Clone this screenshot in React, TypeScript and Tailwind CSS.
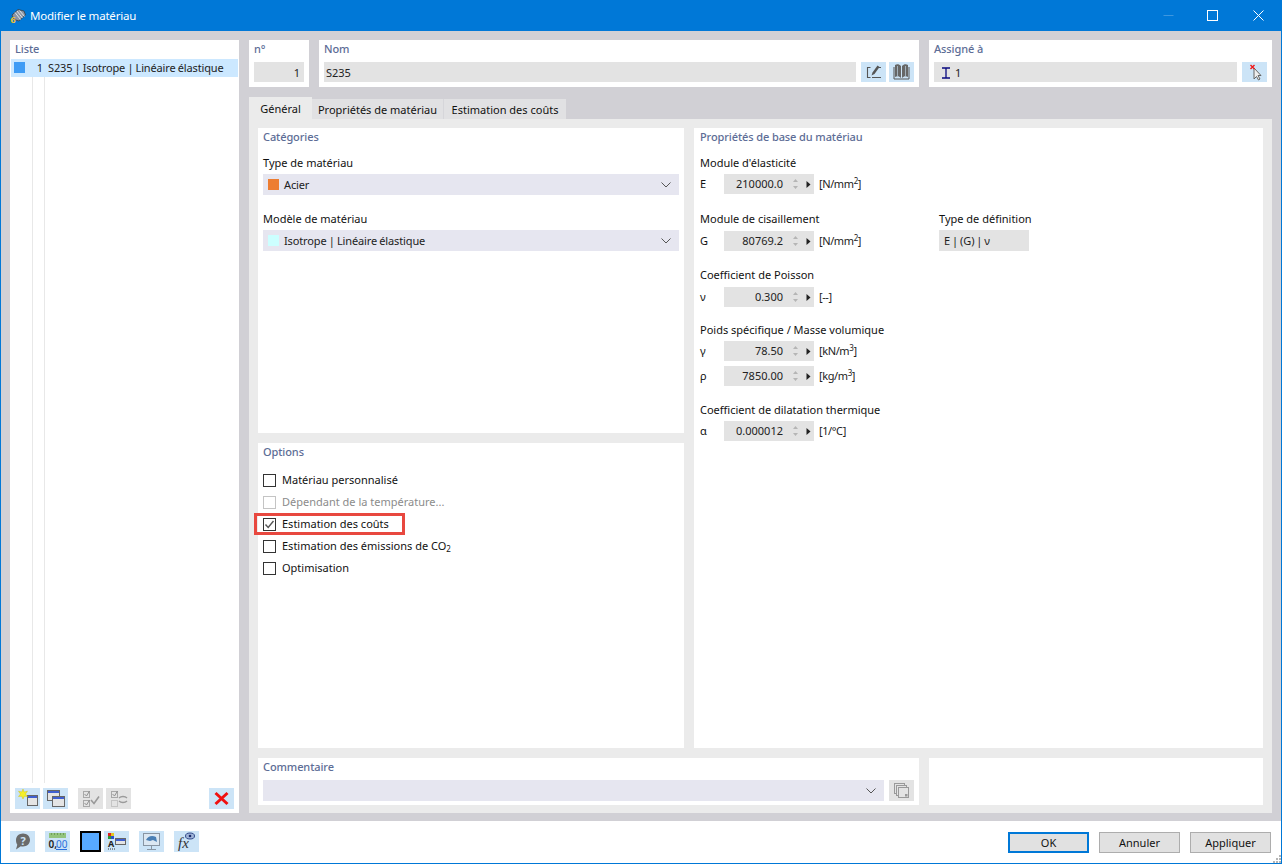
import { ReactNode } from "react";

const ToolBtn = ({ children, off, className }: { children?: ReactNode; off?: boolean; className?: string }) => (
  <div className={`w-[25px] h-[21px] flex items-center justify-center shrink-0 ${off ? "bg-[#e3e3e3]" : "bg-[#cce4f7]"} ${className ?? ""}`}>
    {children}
  </div>
);

const Icon = ({ children }: { children: ReactNode }) => (
  <svg width="25" height="21" viewBox="0 0 25 21" fill="none">
    {children}
  </svg>
);

const Win = ({ x, y, w, h }: { x: number; y: number; w: number; h: number }) => (
  <>
    <rect x={x + 0.5} y={y + 0.5} width={w} height={h} fill="#e4e4e4" stroke="#666" />
    <rect x={x + 1} y={y + 1} width={w - 1} height="2" fill="#3f5fd0" />
  </>
);

const CardTitle = ({ children, className }: { children: ReactNode; className?: string }) => (
  <div className={`h-4 leading-4 font-medium tracking-[-0.1px] text-[#5d6d96] ${className ?? ""}`}>{children}</div>
);

const Select = ({ swatch, text, className }: { swatch?: string; text?: string; className?: string }) => (
  <div className={`h-[21px] bg-[#e6e6f0] flex items-center pl-[5px] pr-[8px] ${className ?? ""}`}>
    {swatch && <div className="w-[11px] h-[11px] mr-[5px]" style={{ background: swatch }} />}
    <span className="flex-1 [word-spacing:-0.5px] tracking-[-0.13px]">{text}</span>
    <svg width="10" height="6" viewBox="0 0 10 6" fill="none">
      <path d="M0.5 0.5 5 5 9.5 0.5" stroke="#555" />
    </svg>
  </div>
);

const Spin = ({ sym, val, unit, sup }: { sym: string; val: string; unit: string; sup?: string }) => (
  <div className="flex items-center h-[20px]">
    <span className="w-[24px] text-[#111]">{sym}</span>
    <div className="w-[90px] h-full bg-[#e3e3e3] flex items-center text-[#222]">
      <span className="w-[59px] text-right">{val}</span>
      <svg className="ml-[9px]" width="7" height="14" viewBox="0 0 7 14" fill="#b5b5b5">
        <path d="M3.5 2 6 5H1zM3.5 12 1 9h5z" />
      </svg>
      <svg className="ml-[7px]" width="5" height="7" viewBox="0 0 5 7" fill="#222">
        <path d="M0.5 0v7L4.5 3.5z" />
      </svg>
    </div>
    <span className="ml-[5px] text-[#222] tracking-[-0.4px]">
      {unit}
      {sup && <sup className="text-[8px] leading-none">{sup}</sup>}
      {sup !== undefined ? "]" : ""}
    </span>
  </div>
);

const Check = ({ label, checked, off, sub }: { label: string; checked?: boolean; off?: boolean; sub?: string }) => (
  <div className="h-[22px] flex items-center relative">
    <div className={`w-[13px] h-[13px] border bg-white flex items-center justify-center ${off ? "border-[#c4c4c4]" : "border-[#333]"}`}>
      {checked && (
        <svg width="11" height="11" viewBox="0 0 11 11" fill="none">
          <path d="M1.5 5.5 4.2 8.500 9.500 2" stroke="#555" strokeWidth="1.4" />
        </svg>
      )}
    </div>
    <span className={`ml-[6px] ${off ? "text-[#8b8b8b]" : "text-[#111]"}`}>
      {label}
      {sub && <sub className="text-[8px] leading-none">{sub}</sub>}
    </span>
    {checked && <div className="absolute left-[-9px] top-0 w-[151px] h-[22px] border-[3px] border-[#e8483f]" />}
  </div>
);

const FootBtn = ({ children, primary }: { children: string; primary?: boolean }) => (
  <div className={`w-[81px] h-[21px] bg-[#e1e1e1] flex items-center justify-center text-[#111] ${primary ? "border-2 border-[#0078d7]" : "border border-[#adadad]"}`}>
    {children}
  </div>
);

export default function App() {
  return (
    <div className="w-[1282px] h-[864px] flex flex-col border border-[#0078d7] border-t-0 bg-white text-[11px] leading-4 overflow-hidden font-['Noto_Sans','Open_Sans',sans-serif]">
      {/* Title bar */}
      <div className="h-[31px] shrink-0 bg-[#0078d7] flex items-center text-white -mx-px px-[9px]">
        <svg width="18" height="18" viewBox="0 0 18 18">
          <path d="M3 8 9 2.500l6 1.500 1.500 4-6.500 6-5-1.500z" fill="#8d95a3" stroke="#333" strokeWidth="0.7" />
          <path d="M6 5.500l5.500 7M8 4l5.500 7M10.500 3.500l5 6" stroke="#e8ebf0" strokeWidth="0.9" />
          <text x="1.500" y="16" fontSize="9" fontWeight="700" fill="#f2c230">6</text>
        </svg>
        <span className="ml-[3px] text-[11.5px] tracking-[-0.2px]">Modifier le matériau</span>
        <div className="flex-1" />
        <svg width="11" height="11" viewBox="0 0 11 11" className="mr-[33px]">
          <path d="M0.5 5.500h10" stroke="#3d97e0" />
        </svg>
        <svg width="11" height="11" viewBox="0 0 11 11" fill="none" className="mr-[35px]">
          <rect x="0.500" y="0.500" width="10" height="10" stroke="#fff" />
        </svg>
        <svg width="11" height="11" viewBox="0 0 11 11" fill="none" className="mr-[9px]">
          <path d="M0.500 0.500l10 10M10.500 0.500l-10 10" stroke="#fff" />
        </svg>
      </div>

      {/* Body */}
      <div className="h-[790px] shrink-0 bg-[#d1d0d5] flex pl-[9px] pr-[9px] pt-[9px] pb-[8px] gap-[10px]">
        {/* Left list */}
        <div className="w-[229px] bg-white flex flex-col">
          <CardTitle className="ml-[5px] mt-px mb-[2px]">Liste</CardTitle>
          <div className="h-[18px] mx-px bg-[#cce8ff] flex items-center text-[#222] whitespace-nowrap">
            <div className="w-[11px] h-[11px] bg-[#3f9cf5] ml-[3px] mb-[2px] shrink-0" />
            <span className="w-[18px] text-right shrink-0">1</span>
            <span className="ml-[5px] [word-spacing:-0.5px] tracking-[-0.14px]">S235 | Isotrope | Linéaire élastique</span>
          </div>
          <div className="flex-1 flex pl-[22px]">
            <div className="w-[13px] border-x border-[#e8e8e8]" />
          </div>
          <div className="h-[21px] flex items-start px-[5px] mb-[4px] mt-[5px]">
            <ToolBtn>
              <Icon>
                <Win x={12} y={7} w={10} h={10} />
                <path d="M8 1l1.200 3 3.300-.8L10.500 6l2 2.500-3.200-.3L8 11l-1.300-2.800-3.200.3 2-2.500-2-2.800 3.300.8z" fill="#f5f02a" stroke="#c9b800" strokeWidth="0.4" />
              </Icon>
            </ToolBtn>
            <ToolBtn className="ml-[3px]">
              <Icon>
                <Win x={4} y={2} w={12} h={10} />
                <Win x={9} y={8} w={12} h={10} />
              </Icon>
            </ToolBtn>
            <ToolBtn off className="ml-[10px]">
              <Icon>
                <rect x="5.500" y="3.500" width="6" height="6" stroke="#a8a8a8" />
                <rect x="5.500" y="12.500" width="6" height="6" stroke="#a8a8a8" />
                <path d="M6.500 6l2 2 3-5M6.500 15l2 2 3-5" stroke="#8f8f8f" />
                <path d="M13 12l3 3.500 5-7" stroke="#999" strokeWidth="1.600" />
              </Icon>
            </ToolBtn>
            <ToolBtn off className="ml-[3px]">
              <Icon>
                <rect x="5.500" y="3.500" width="6" height="6" stroke="#a8a8a8" />
                <rect x="5.500" y="12.500" width="6" height="6" stroke="#c4c4c4" />
                <path d="M6.500 6l2 2 3-5" stroke="#8f8f8f" />
                <path d="M13 10c2-2 6-2 8 0M21 13c-2 2-6 2-8 0" stroke="#9a9a9a" strokeWidth="1.300" />
              </Icon>
            </ToolBtn>
            <div className="flex-1" />
            <ToolBtn>
              <Icon>
                <path d="M6.500 5l12 11M18.500 5l-12 11" stroke="#f01010" strokeWidth="3" />
              </Icon>
            </ToolBtn>
          </div>
        </div>

        {/* Right side */}
        <div className="w-[1023px] flex flex-col">
          <div className="h-[47px] flex gap-[10px]">
            <div className="w-[60px] bg-white px-[5px] pt-px">
              <CardTitle>n°</CardTitle>
              <div className="mt-[5px] h-[20px] bg-[#e3e3e3] flex items-center justify-end pr-[4px] pt-px text-[#222]">1</div>
            </div>
            <div className="w-[600px] bg-white px-[5px] pt-px">
              <CardTitle>Nom</CardTitle>
              <div className="mt-[5px] flex">
                <div className="flex-1 h-[20px] bg-[#e3e3e3] flex items-center pl-[2px] pt-px text-[#222]">S235</div>
                <ToolBtn className="ml-[5px] !h-[20px]">
                  <svg width="25" height="20" viewBox="0 0 25 20" fill="none">
                    <path d="M9.500 5.500H6.500v10h3M11 15.500h9" stroke="#555" strokeWidth="1.100" />
                    <path d="M10.500 13.500l1-3 5-7 2 1.500-5 7z" fill="#555" />
                    <path d="M17 5.500h3" stroke="#555" />
                  </svg>
                </ToolBtn>
                <ToolBtn className="ml-[3px] !h-[20px]">
                  <svg width="25" height="20" viewBox="0 0 25 20" fill="#666">
                    <path d="M6 3c2-1 4-1 6 1v12c-2-2-4-2-6-1zM13 4c2-2 4-2 6-1v12c-2-1-4-1-6 1z" />
                    <path d="M5 5v12h15V5" fill="none" stroke="#555" />
                    <path d="M8.500 4v10M16.500 4v10" stroke="#cce4f7" strokeWidth="0.600" />
                  </svg>
                </ToolBtn>
              </div>
            </div>
            <div className="w-[343px] bg-white px-[5px] pt-px">
              <CardTitle>Assigné à</CardTitle>
              <div className="mt-[5px] flex">
                <div className="flex-1 h-[20px] bg-[#e3e3e3] flex items-center pl-[7px] pt-px text-[#222]">
                  <svg width="10" height="12" viewBox="0 0 10 12" fill="none" className="mr-[4px]">
                    <path d="M1 1h8M1 11h8M5 1v10" stroke="#0a0a80" strokeWidth="1.300" />
                  </svg>
                  1
                </div>
                <ToolBtn className="ml-[5px] !h-[20px]">
                  <svg width="25" height="20" viewBox="0 0 25 20" fill="none">
                    <path d="M12 6v11l2.500-2.500 2 3.500 1.500-1-2-3.500H19z" fill="#eee" stroke="#666" />
                    <path d="M8.500 3l4 4M12.500 3l-4 4" stroke="#f01818" strokeWidth="1.400" />
                  </svg>
                </ToolBtn>
              </div>
            </div>
          </div>

          {/* Tabs */}
          <div className="h-[22px] mt-[10px] flex items-end text-[#111]">
            <div className="w-[63px] h-[22px] bg-[#ebebeb] flex items-center justify-center pt-[2px]">Général</div>
            <div className="w-[131px] h-[20px] bg-[#e1e1e3] flex items-center justify-center pt-px">Propriétés de matériau</div>
            <div className="w-[123px] h-[20px] bg-[#e1e1e3] border-l border-[#d6d6da] flex items-center justify-center pt-px">Estimation des coûts</div>
          </div>

          {/* Tab page */}
          <div className="flex-1 bg-[#ebebeb] p-[9px] pb-[8px] flex flex-col gap-[10px]">
            <div className="h-[620px] flex gap-[10px]">
              <div className="w-[426px] flex flex-col gap-[10px]">
                <div className="h-[305px] bg-white px-[5px] pt-px">
                  <CardTitle>Catégories</CardTitle>
                  <div className="mt-[10px] text-[#111]">Type de matériau</div>
                  <Select swatch="#ed7d31" text="Acier" className="mt-[3px] text-[#222]" />
                  <div className="mt-[16px] text-[#111]">Modèle de matériau</div>
                  <Select swatch="#ccffff" text="Isotrope | Linéaire élastique" className="mt-[3px] text-[#222]" />
                </div>
                <div className="flex-1 bg-white px-[5px] pt-px">
                  <CardTitle>Options</CardTitle>
                  <div className="mt-[9px]">
                    <Check label="Matériau personnalisé" />
                    <Check label="Dépendant de la température..." off />
                    <Check label="Estimation des coûts" checked />
                    <Check label="Estimation des émissions de CO" sub="2" />
                    <Check label="Optimisation" />
                  </div>
                </div>
              </div>

              <div className="flex-1 bg-white px-[6px] pt-px text-[#111]">
                <CardTitle>Propriétés de base du matériau</CardTitle>
                <div className="mt-[10px]">Module d'élasticité</div>
                <div className="mt-[3px]">
                  <Spin sym="E" val="210000.0" unit="[N/mm" sup="2" />
                </div>
                <div className="mt-[17px] flex">
                  <div className="w-[239px]">Module de cisaillement</div>
                  <div>Type de définition</div>
                </div>
                <div className="mt-[4px] flex items-start">
                  <div className="w-[239px]">
                    <Spin sym="G" val="80769.2" unit="[N/mm" sup="2" />
                  </div>
                  <div className="w-[90px] h-[21px] -mt-px bg-[#e3e3e3] flex items-center pl-[5px] text-[#222] [word-spacing:-1px]">E | (G) | ν</div>
                </div>
                <div className="mt-[16px]">Coefficient de Poisson</div>
                <div className="mt-[4px]">
                  <Spin sym="ν" val="0.300" unit="[--]" />
                </div>
                <div className="mt-[15px]">Poids spécifique / Masse volumique</div>
                <div className="mt-[3px]">
                  <Spin sym="γ" val="78.50" unit="[kN/m" sup="3" />
                </div>
                <div className="mt-[5px]">
                  <Spin sym="ρ" val="7850.00" unit="[kg/m" sup="3" />
                </div>
                <div className="mt-[16px]">Coefficient de dilatation thermique</div>
                <div className="mt-[3px]">
                  <Spin sym="α" val="0.000012" unit="[1/°C]" />
                </div>
              </div>
            </div>

            {/* Comment */}
            <div className="flex-1 flex gap-[10px]">
              <div className="w-[661px] bg-white px-[5px] pt-px">
                <CardTitle>Commentaire</CardTitle>
                <div className="mt-[5px] flex">
                  <Select className="flex-1" />
                  <ToolBtn off className="ml-[5px]">
                    <svg width="25" height="21" viewBox="0 0 25 21" fill="none" stroke="#999">
                      <rect x="5.500" y="3.500" width="10" height="10" />
                      <rect x="7.500" y="5.500" width="10" height="10" fill="#e3e3e3" />
                      <rect x="9.500" y="7.500" width="10" height="10" fill="#e3e3e3" />
                      <rect x="16" y="14" width="2.500" height="2.500" fill="#999" stroke="none" />
                    </svg>
                  </ToolBtn>
                </div>
              </div>
              <div className="flex-1 bg-white" />
            </div>
          </div>
        </div>
      </div>

      {/* Footer */}
      <div className="flex-1 relative flex items-start pt-[10px] pl-[9px]">
        <ToolBtn>
          <Icon>
            <path d="M13 2.500c4 0 7 2.800 7 6.500s-3 6.500-7 6.500c-.8 0-1.500-.1-2.200-.3L6 18.500l1.300-4.700C6.500 12.700 6 11 6 9c0-3.700 3-6.500 7-6.500z" fill="#6b6b6b" />
            <text x="13" y="13.500" fontSize="11" fontWeight="700" fill="#cce4f7" textAnchor="middle">?</text>
          </Icon>
        </ToolBtn>
        <ToolBtn className="ml-[10px]">
          <Icon>
            <rect x="4" y="2" width="17" height="5" fill="#93c47d" />
            <path d="M6.500 2v2M9.500 2v2M12.500 2v2M15.500 2v2M18.500 2v2" stroke="#6f9e5a" />
            <text x="3.500" y="17" fontSize="10" fill="#222" fontWeight="600">0,</text>
            <text x="11" y="17" fontSize="10" fill="#2a6fdb">00</text>
            <path d="M11 18.500h11" stroke="#2a6fdb" />
          </Icon>
        </ToolBtn>
        <div className="ml-[10px] w-[21px] h-[21px] bg-[#57a9ff] border-2 border-black" />
        <ToolBtn className="ml-[3px]">
          <Icon>
            <rect x="4" y="2" width="3" height="3" fill="#e02020" />
            <rect x="7" y="2" width="3" height="3" fill="#e6c820" />
            <rect x="4" y="5" width="3" height="3" fill="#2a9a30" />
            <rect x="7" y="5" width="3" height="3" fill="#2a50d0" />
            <text x="4" y="16" fontSize="9" fontWeight="700" fill="#222">A</text>
            <path d="M4 18h8" stroke="#333" strokeDasharray="1 1" />
            <Win x={11} y={7} w={10} h={6} />
          </Icon>
        </ToolBtn>
        <ToolBtn className="ml-[10px]">
          <Icon>
            <rect x="4.500" y="2.500" width="16" height="12" fill="#dbe7f2" stroke="#8895a3" />
            <path d="M7 9c2-4 6-5 10-3l1 5-4-2-3 1z" fill="#4a7fb5" />
            <path d="M12.500 15v3M8 18.500h9" stroke="#8895a3" />
          </Icon>
        </ToolBtn>
        <ToolBtn className="ml-[10px]">
          <Icon>
            <text x="4" y="17" fontSize="15" fontStyle="italic" fontFamily="Liberation Serif" fill="#333">fx</text>
            <ellipse cx="16" cy="5" rx="4.500" ry="3" fill="#9fb4d8" stroke="#334a8a" />
            <circle cx="16" cy="5" r="1.300" fill="#1a2a6a" />
          </Icon>
        </ToolBtn>
        <div className="flex-1" />
        <div className="flex gap-[10px] mr-[10px] mt-px">
          <FootBtn primary>OK</FootBtn>
          <FootBtn>Annuler</FootBtn>
          <FootBtn>Appliquer</FootBtn>
        </div>
        <svg width="8" height="8" viewBox="0 0 8 8" fill="#b5b5b5" className="absolute right-0 bottom-0">
          <rect x="6" y="0" width="2" height="2" />
          <rect x="3" y="3" width="2" height="2" />
          <rect x="6" y="3" width="2" height="2" />
          <rect x="0" y="6" width="2" height="2" />
          <rect x="3" y="6" width="2" height="2" />
          <rect x="6" y="6" width="2" height="2" />
        </svg>
      </div>
    </div>
  );
}
